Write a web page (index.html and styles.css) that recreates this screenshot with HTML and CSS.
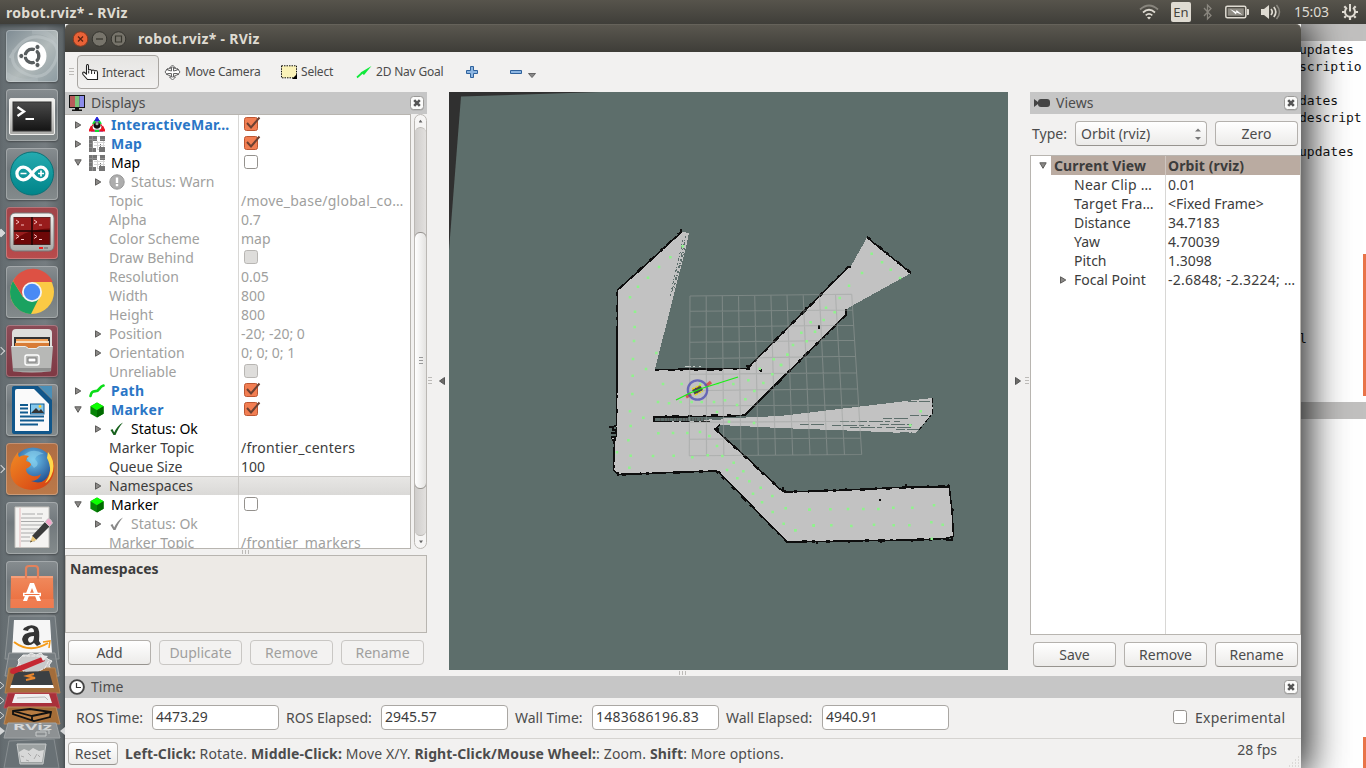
FILE: index.html
```html
<!DOCTYPE html>
<html lang="en">
<head>
<meta charset="utf-8">
<title>robot.rviz* - RViz</title>
<link rel="stylesheet" href="styles.css">
</head>
<body>
<svg class="defs" width="0" height="0" aria-hidden="true">
  <defs>
    <linearGradient id="gOrange" x1="0" y1="0" x2="0" y2="1"><stop offset="0" stop-color="#f08a5d"/><stop offset="1" stop-color="#ea6a3a"/></linearGradient>
    <linearGradient id="gTeal" x1="0" y1="0" x2="0" y2="1"><stop offset="0" stop-color="#25abb0"/><stop offset="1" stop-color="#008489"/></linearGradient>
    <linearGradient id="gMetal" x1="0" y1="0" x2="0" y2="1"><stop offset="0" stop-color="#f4f4f2"/><stop offset="1" stop-color="#a9a9a6"/></linearGradient>
    <linearGradient id="gDark" x1="0" y1="0" x2="0" y2="1"><stop offset="0" stop-color="#4a4a4a"/><stop offset="1" stop-color="#141414"/></linearGradient>
    <radialGradient id="gGlobe" cx=".5" cy=".3" r=".7"><stop offset="0" stop-color="#6cc4ee"/><stop offset="1" stop-color="#14397e"/></radialGradient>
    <linearGradient id="gFox" x1="0" y1="0" x2="1" y2="1"><stop offset="0" stop-color="#f08a24"/><stop offset="1" stop-color="#d33b12"/></linearGradient>
    <symbol id="right" viewBox="0 0 8 8"><path d="M1.500.8 6.800 4 1.500 7.200z" fill="#8b8987" stroke="#5d5c5a" stroke-width="1"/></symbol>
    <symbol id="down" viewBox="0 0 8 8"><path d="M.8.8h6.400L4 6.300z" fill="#8b8987" stroke="#5d5c5a" stroke-width="1"/></symbol>
    <symbol id="checked" viewBox="0 0 18 17"><rect x="1.500" y="2.500" width="13" height="13" rx="2" fill="#f27e52" stroke="#bc5632"/><path d="m4 8 4 4.500L16.500 2.500" fill="none" stroke="#6d4132" stroke-width="2"/></symbol>
    <symbol id="unchecked" viewBox="0 0 18 17"><rect x="1.500" y="2.500" width="13" height="13" rx="2.200" fill="#fff" stroke="#94918d"/></symbol>
    <symbol id="disabled" viewBox="0 0 18 17"><rect x="1.500" y="2.500" width="13" height="13" rx="2.200" fill="#dedddb" stroke="#b8b6b3"/></symbol>
    <symbol id="map" viewBox="0 0 16 16"><path d="M0 0h8v5H4v7h3v4H0zM11 0h5v5h-5zM10 11h1V8h1v3h4v5h-6z" fill="#747474"/><path d="M0 3.500h8M0 7.500h4M0 11.500h4M3.500 0v16M11 3.500h5" stroke="#8f8f8f"/><path d="M8 .5h3M5 6.500h11M5 9.500h11M8 13.500h2M8.500 5v8M14.500 5v6" stroke="#d8d8d8" fill="none"/></symbol>
    <symbol id="marker3" viewBox="0 0 16 16"><path d="M8 3 2 13h12z" fill="none" stroke="#888"/><path d="m8 0 2.500 4h-5zM2 14h12" fill="#22c" stroke="#22d" stroke-width="1"/><path d="m0 14 2-4 3 4zm16 0-2-4-3 4zM4.500 7l-2 3m9-3 2 3" fill="#e12" stroke="#e12" stroke-width="1.200"/><path d="m6 4-2 3m6-3 2 3M6 14h4" stroke="#1d3" stroke-width="2"/><circle cx="8" cy="8.500" r="3.200" fill="#111"/><circle cx="8" cy="6.700" r="1.500" fill="#aaa"/></symbol>
    <symbol id="cube" viewBox="0 0 16 17"><path d="m8 .5 7 4v8l-7 4-7-4v-8z" fill="#078507"/><path d="m8 .5 7 4-7 4.200-7-4.200z" fill="#0bff00"/><path d="m8 8.700 7-4.200v8l-7 4z" fill="#006a00"/></symbol>
    <symbol id="path" viewBox="0 0 16 16"><path d="M1.500 13c1-5 3-4.500 6-5s3-4.500 7-5.500" fill="none" stroke="#0bdc18" stroke-width="2.600" stroke-linecap="round"/></symbol>
    <symbol id="tick" viewBox="0 0 16 16"><path d="M1.500 9 3.500 8l1.700 3.500C7 7.500 10 3.500 14 1.500 10.500 5.500 8 10 6.500 14h-2z" fill="currentColor"/></symbol>
    <symbol id="warn" viewBox="0 0 16 16"><circle cx="8" cy="8" r="7.200" fill="#adadad" stroke="#989898"/><path d="M6.800 3.500h2.400v5.500H6.800zm0 6.500h2.400v2.300H6.800z" fill="#fff"/></symbol>
    <symbol id="close" viewBox="0 0 14 15"><rect x=".5" y="1" width="13" height="13.500" rx="3" fill="#aaa"/><rect x=".5" y=".5" width="13" height="13" rx="3" fill="#fbfbfa" stroke="#9b9a98"/><path d="m4.200 4.200 5.600 5.600m0-5.600L4.200 9.800" stroke="#555" stroke-width="2.600"/></symbol>
  </defs>
</svg>

<div class="desktop">
  <header class="panel">
    <b class="panel-title">robot.rviz* - RViz</b>
    <div class="tray">
      <svg class="wifi" width="20" height="16" viewBox="0 0 20 16" fill="none" stroke="#dfdbd2" stroke-width="1.700"><path d="M1 5.500q9-8 18 0" stroke="#88857d"/><path d="M4 8.500q6-5.500 12 0M6.700 11.300q3.300-3 6.600 0"/><path d="m8 13.500 2 2 2-2q-2-1.500-4 0z" fill="#dfdbd2" stroke="none"/></svg>
      <span class="lang">En</span>
      <svg class="bt" width="10" height="18" viewBox="0 0 10 18"><path d="m1 5 7 7.500-3.500 3.500V2L8 5.500 1 13" fill="none" stroke="#8a877f" stroke-width="1.300"/></svg>
      <svg class="batt" width="24" height="14" viewBox="0 0 24 14"><rect x=".8" y="1.300" width="20" height="11.400" rx="1.500" fill="none" stroke="#dfdbd2" stroke-width="1.500"/><rect x="2.800" y="3.300" width="16" height="7.400" fill="#8f8c84"/><path d="M22 4.500h1.500v5H22" fill="#dfdbd2" stroke="#dfdbd2"/><path d="m5 4 6 3 .5-2 6 5-6-2.500-.5 2z" fill="#fff"/></svg>
      <svg class="vol" width="20" height="16" viewBox="0 0 20 16"><path d="M0 5h3l5-4v14l-5-4H0z" fill="#dfdbd2"/><path d="M10 5q2.500 3 0 6M12.800 3q4 5 0 10" fill="none" stroke="#dfdbd2" stroke-width="1.700"/><path d="M15.500 1q6 7 0 14" fill="none" stroke="#8a877f" stroke-width="1.500"/></svg>
      <span class="clock">15:03</span>
      <svg class="gear" width="16" height="16" viewBox="0 0 16 16" fill="none" stroke="#dfdbd2"><path d="M5 3.800a5 5 0 1 0 6 0" stroke-width="2"/><path d="M8 0v7.500" stroke-width="2"/><path d="M2.300 2.300 4 4m9.700-1.700L12 4M0 8h3m10 0h3M2.300 13.700 4 12m9.700 1.700L12 12M8 13v3" stroke-width="2.200"/></svg>
    </div>
  </header>

  <div class="workspace">
    <nav class="launcher">
      <div class="tile t-dash"><svg viewBox="0 0 52 52"><path d="M4 28Q18 2 38 8T48 34Q38 52 20 44T8 20" fill="none" stroke="#c3cbce" stroke-width="3" opacity=".5"/><path d="M0 44Q12 54 32 50M26 2q22-2 26 18" fill="none" stroke="#c3cbce" stroke-width="5" opacity=".25"/><circle cx="26" cy="26" r="14.500" fill="#fff"/><circle cx="26" cy="26" r="6.800" fill="none" stroke="#585d5f" stroke-width="3.400"/><path d="M26 26 14 26M26 26l6.500-11M26 26l6.500 11" stroke="#fff" stroke-width="1.500"/><g fill="#585d5f" stroke="#fff"><circle cx="15.300" cy="26" r="2.600"/><circle cx="31.500" cy="17" r="2.600"/><circle cx="31.500" cy="35" r="2.600"/></g><circle cx="26" cy="26" r="4.900" fill="#fff"/></svg></div>
      <div class="tile t-gray"><svg viewBox="0 0 52 52"><rect x="3.500" y="9.500" width="45" height="36" rx="1.500" fill="url(#gMetal)" stroke="#efefed"/><rect x="7" y="13" width="38" height="29" fill="url(#gDark)" stroke="#333"/><path d="m11.500 18 6.500 4.500-6.500 4.500" fill="none" stroke="#fff" stroke-width="2.400"/><path d="M19.500 30H28" stroke="#fff" stroke-width="2"/></svg></div>
      <div class="tile t-gray"><svg viewBox="0 0 52 52"><circle cx="26" cy="25.500" r="21.500" fill="url(#gTeal)" stroke="#087277"/><path d="M26 25.500c-3-4.500-5.500-6.300-8.800-6.300a6.300 6.300 0 0 0 0 12.600c3.300 0 5.800-2 8.800-6.300s5.500-6.300 8.800-6.300a6.300 6.300 0 0 1 0 12.600c-3.300 0-5.800-2-8.800-6.300z" fill="none" stroke="#fff" stroke-width="3.300"/><path d="M14.500 25.500h6M32 25.500h6m-3-3v6" stroke="#fff" stroke-width="1.700"/></svg></div>
      <div class="tile t-red has-arrow solid"><svg viewBox="0 0 52 52"><rect x="4" y="6" width="44" height="38" rx="5" fill="url(#gMetal)" stroke="#777"/><rect x="8" y="10.500" width="36" height="27" fill="#6d0707" stroke="#4a2222"/><path d="M8 10.500h36v11Q20 22 8 34z" fill="#b62b2b" opacity=".6"/><path d="M26 10v28M8 24h36" stroke="#180404" stroke-width="1.400"/><path d="m10 13 3 2-3 2m5 1h3M28 13l3 2-3 2m5 1h3M10 27.500l3 2-3 2m5 1h3M28 27.500l3 2-3 2m5 1h3" fill="none" stroke="#f7bcbc"/><path d="M33 41h4" stroke="#e22" stroke-width="2"/><path d="M38 41h4" stroke="#888" stroke-width="2"/></svg></div>
      <div class="tile t-gray"><svg viewBox="0 0 52 52"><circle cx="26" cy="26" r="22" fill="#fbca45"/><path d="M26 26 7 15a22 22 0 0 1 39.800 1H26z" fill="#dd5144"/><path d="M7 15 17 31a22 22 0 0 0 17-1l-9 18A22 22 0 0 1 7 15z" fill="#1aa260"/><path d="m7 15 10 16 9-15z" fill="#dd5144"/><circle cx="26" cy="26" r="10" fill="#f4f4f4"/><circle cx="26" cy="26" r="8.200" fill="#4a8af4"/></svg></div>
      <div class="tile t-wine has-arrow"><svg viewBox="0 0 52 52"><path d="M6 8q0-4 4-4h32q4 0 4 4v14H6z" fill="#dededb"/><path d="M8 12h36v12H8z" fill="#333"/><path d="M10 14h32v8H10z" fill="#f2a259"/><path d="M9 18h34v6H9z" fill="#d87c36"/><path d="M10 17h33" stroke="#f7dec0" stroke-width="2"/><path d="M5 21h14l3 2h8l3-2h14l-2 25q-19 3-38 0z" fill="#b7b8b6"/><path d="M5.500 21.500h14l3 2h8l3-2h13" fill="none" stroke="#ececea"/><path d="m7 43 38 0-.3 3.500H7.300z" fill="#8f908f"/><rect x="19" y="30" width="14" height="10" rx="2" fill="none" stroke="#fff" stroke-width="1.400"/><rect x="22" y="33" width="8" height="4" fill="#fff" stroke="#777"/></svg></div>
      <div class="tile t-gray"><svg viewBox="0 0 52 52"><path d="M8 2h24l14 14v32q0 2-2 2H8q-2 0-2-2V4q0-2 2-2z" fill="#10568a"/><path d="M33 2h13v13z" fill="#4a8fb8"/><path d="M11 5h17l15 15v27H9V7q0-2 2-2z" fill="#fafafa"/><path d="M14 21h8M14 24.500h8M14 28.500h8M14 32.500h24M14 36.500h24M14 40.500h18" stroke="#115b8f" stroke-width="1.800"/><rect x="24.500" y="20" width="13.500" height="10" fill="#83c8ed" stroke="#115b8f"/><path d="m25 29 5-5 3 3 2-2 3 4z" fill="#343434"/><circle cx="34" cy="22.500" r="1.400" fill="#fc3"/></svg></div>
      <div class="tile t-orange has-arrow"><svg viewBox="0 0 52 52"><circle cx="27" cy="25" r="20.500" fill="url(#gGlobe)"/><path d="M18 12q9-8 20-1-7 0-9 5 6 6-1 9z" fill="#90d6ef" opacity=".55"/><path d="M45 13q4 7 3 16-4 17-22 18Q9 46 5 33 2 21 12 9q0 3 1 5 4-3 10-1-3 2-3 5 5 1 5 4-1 2-5 4 0 4 4 6 6 3 11-1-2 7-10 7 13 5 18-7 3-8-1-18z" fill="url(#gFox)"/><path d="M42 9q7 8 5 19-3 10-8 12 9-12 2-25z" fill="#ffd84b"/></svg></div>
      <div class="tile t-gray"><svg viewBox="0 0 52 52"><path d="M9 5h34v40.500H9z" fill="#f4f3f1" stroke="#c3c1bd"/><path d="M14 6v39" stroke="#e2a3a7" stroke-width=".7"/><path d="M16 12h13m2 0h6M15 16h21M15 19.500h23M15 23h22M15 27h17M15 31h16M15 35h9M15 39h14" stroke="#aaa" stroke-width="1"/><path d="m26 34 13-14 4.500 4.500L30 38z" fill="#3b3b3b"/><path d="m24 40.500 2.500-6.500 4 4z" fill="#e9c678"/><path d="m24 40.500 2-1-1-1z" fill="#222"/><path d="m39 20 3-3.500q3 0 4.500 4.500l-3 3.500z" fill="#f3a6ca" stroke="#c8c8c8"/></svg></div>
      <div class="tile t-gray"><svg viewBox="0 0 52 52"><path d="M5 15h42l.5 32H4.500z" fill="url(#gOrange)"/><path d="M5 15h42v2H5z" fill="#f5a07b"/><path d="M20 18V8q0-3 3-3h6q3 0 3 3v10" fill="none" stroke="#e3815b" stroke-width="2.200"/><path d="M4.500 38H48v9H4.500z" fill="#f4855c" opacity=".6"/><path d="m17 40 7-18h4l7 18h-4l-5-13-5 13z" fill="#fff"/><path d="M17 33.500h18" stroke="#fff" stroke-width="3.500"/><path d="M18.500 33.500h15" stroke="#ed7545"/></svg></div>
      <svg class="folded" width="65" height="155" viewBox="0 613 65 155">
        <path d="M9 616h46l4 43H5z" fill="#737b80" fill-opacity=".6" stroke="#8e9496"/>
        <path d="M14 620h36l2 33H12z" fill="#f6f6f6"/>
        <path d="M24 628q7-5 13-1 3 2 2 14l2 3-4 2-3-3q-5 4-10 1-4-6 1-10 4-2 9-2 0-4-3-4-3 1-3 3l-5-1zm10 8q-6 0-6 4 1 4 4 2 2-1 2-6z" fill="#333"/>
        <path d="M14 642q16 12 34 1" fill="none" stroke="#f49b19" stroke-width="2"/><path d="m43 642 7-1-1 7" fill="none" stroke="#f49b19" stroke-width="1.500"/>
        <path d="M9 653h46l4 23H5z" fill="#777e82" fill-opacity=".75" stroke="#979b9d"/>
        <path d="m20 659 3-4h5l3-2 5 2 5-2 4 5 7 3-3 4 2 5-8 2-7 4-9-1-5-4-7-1 3-5z" fill="#c9caca" stroke="#eee"/>
        <path d="M9 668h46l5 25H5z" fill="#a36d3b" stroke="#b4824e"/>
        <path d="m18 660 4-4h22l5 4-4 8-10 5-12-2z" fill="#c9caca" stroke="#eee" stroke-dasharray="4 1"/>
        <path d="m15 672 34-1 4 14H11z" fill="#3c4043"/><path d="M11 685h42l1 3H10z" fill="#fff"/><path d="m34 674-7 2 8 2-9 2" fill="none" stroke="#e9872e" stroke-width="2"/>
        <path d="m11 669 31-12 3 4-31 13q-6 0-3-5z" fill="#c52732"/>
        <path d="m40 655 8 1-5 5z" fill="#e8e8e8"/>
        <path d="M8 693h48l4 15H4z" fill="#a9303b" stroke="#ba4c54"/>
        <path d="m15 694 34 0 3 9H12z" fill="#eee"/><path d="m17 698 28-1 3 3" stroke="#bbb" fill="none"/>
        <path d="M8 707h48l4 17H4z" fill="#a56e38" stroke="#b98a5e"/>
        <path d="m13 711 17-2 21 3-1 5-16 4-21-7zl19 5 19-4-19 4v5" fill="#b87c42" stroke="#111" stroke-width="1.800"/>
        <path d="M8 723h48l4 15H4z" fill="#8d9193" stroke="#9fa3a5"/>
        <text x="13" y="730" class="rviz-mark" textLength="39" lengthAdjust="spacingAndGlyphs">RViz</text><path d="M36 732h10v4H36zm4-2h9v4" fill="none" stroke="#c7caca"/>
        <path d="m9 741 45-2 5 29H4z" fill="#697175" stroke="#878d90"/>
        <path d="M17 744h29l-3 20H20z" fill="#9da2a2" stroke="#c7caca"/><path d="m19 752 5-3 5 2 4-3 6 3 5-1-2 12H21z" fill="#dedede" opacity=".9"/><path d="m21 756 3 1m4-4 3 3m6-2-3 5m-8 1 3 1m9-6 2 2" stroke="#aaa"/>
        <path d="m0 682 4 3.500-4 3.500m0 8 4 3.500-4 3.500m0 8 4 3.500-4 3.500" fill="none" stroke="#d5d7d8"/><path d="m0 727 5 4-5 4zm65 0-5 4 5 4z" fill="#d5d7d8"/>
      </svg>
    </nav>

    <main class="window">
      <div class="titlebar">
        <svg width="56" height="18" viewBox="0 0 56 18"><circle cx="8.500" cy="9" r="7.300" fill="#e96237" stroke="#873a20"/><path d="m6 6.500 5 5m0-5-5 5" stroke="#5c2413" stroke-width="1.300"/><circle cx="27.500" cy="9" r="7.300" fill="#77746b" stroke="#34332e"/><path d="M24 9h7" stroke="#38372f" stroke-width="1.300"/><circle cx="46.500" cy="9" r="7.300" fill="#77746b" stroke="#34332e"/><path d="M43.500 6h6v6h-6z" fill="none" stroke="#38372f" stroke-width="1.200"/></svg>
        <b>robot.rviz* - RViz</b>
      </div>

      <div class="toolbar">
        <i class="grip"></i>
        <div class="tool active"><svg width="17" height="17" viewBox="0 0 17 17"><path d="M4.500 10V2q0-1.500 1-1.500T6.500 2v4.500Q6.500 5.500 8 5.500T9.500 7q0-1 1.500-1t1.500 1.500q0-1 1.500-1t1.500 2v7H5.500L1 10.500Q0 8 2 8z" fill="#fff" stroke="#222" stroke-width="1.100"/><path d="M6.700 7v2.500m2.900-3V10m2.900-2v2" stroke="#222"/></svg><span>Interact</span></div>
        <div class="tool move"><svg width="17" height="17" viewBox="0 0 17 17" fill="none" stroke="#666" stroke-width="1"><path d="m8.500 1 3 3h-2v3l4-1V4.500L16 8l-2.500 3V9.500h-4V13h2l-3 3-3-3h2V9.500h-4V11L1 8l2.500-3.500V6l4 1V4h-2z" fill="#fff"/><path d="m2 6 6.500-3L15 6m-13 4 6.500 3L15 10"/></svg><span>Move Camera</span></div>
        <div class="tool select"><svg width="16" height="14" viewBox="0 0 16 14"><rect x=".5" y=".8" width="15" height="12" fill="#fbf3b9" stroke="#111" stroke-dasharray="1.500 1"/><path d="M16 9v5h-5z" fill="#000"/></svg><span>Select</span></div>
        <div class="tool nav"><svg width="16" height="14" viewBox="0 0 16 14"><path d="m1 12.500 5-4.500" stroke="#11e93b" stroke-width="1.700"/><path d="M4.500 7.500 15.500 1 8 10z" fill="#11e93b"/></svg><span>2D Nav Goal</span></div>
        <svg class="plus" width="12" height="12" viewBox="0 0 12 12"><path d="M4.500.5h3v4h4v3h-4v4h-3v-4h-4v-3h4z" fill="#8db6e2" stroke="#2f629c"/></svg>
        <svg class="minus" width="12" height="4" viewBox="0 0 12 4"><path d="M.5.5h11v3H.5z" fill="#8db6e2" stroke="#2f629c"/></svg>
        <svg class="drop" width="8" height="5" viewBox="0 0 8 5"><path d="M.5.5h7L4 4.500z" fill="#888" stroke="#666"/></svg>
      </div>

      <div class="body">
        <section class="displays">
          <div class="dock-head"><svg width="16" height="16" viewBox="0 0 16 16"><path d="M0 0h16v13H0z" fill="#111"/><path d="M1 1h5v11H1z" fill="#b95a5a"/><path d="M6 1h4.500v11H6z" fill="#7bc37b"/><path d="M10.500 1H15v11h-4.500z" fill="#8b8bea"/><path d="M6 13h4v1.500h3V16H3v-1.500h3z" fill="#111"/></svg><span>Displays</span><svg class="x" width="14" height="15"><use href="#close"/></svg></div>
          <div class="tree-area">
            <div class="tree">
              <div class="row l1 on"><div class="key"><svg class="ar"><use href="#right"/></svg><svg class="ic"><use href="#marker3"/></svg><b>InteractiveMar…</b></div><div class="val"><svg class="cb"><use href="#checked"/></svg></div></div>
              <div class="row l1 on"><div class="key"><svg class="ar"><use href="#right"/></svg><svg class="ic"><use href="#map"/></svg><b>Map</b></div><div class="val"><svg class="cb"><use href="#checked"/></svg></div></div>
              <div class="row l1 off"><div class="key"><svg class="ar"><use href="#down"/></svg><svg class="ic"><use href="#map"/></svg><span>Map</span></div><div class="val"><svg class="cb"><use href="#unchecked"/></svg></div></div>
              <div class="row l2 dim"><div class="key"><svg class="ar"><use href="#right"/></svg><svg class="ic"><use href="#warn"/></svg><span>Status: Warn</span></div><div class="val"></div></div>
              <div class="row l3 dim"><div class="key">Topic</div><div class="val wide">/move_base/global_co…</div></div>
              <div class="row l3 dim"><div class="key">Alpha</div><div class="val">0.7</div></div>
              <div class="row l3 dim"><div class="key">Color Scheme</div><div class="val">map</div></div>
              <div class="row l3 dim"><div class="key">Draw Behind</div><div class="val"><svg class="cb"><use href="#disabled"/></svg></div></div>
              <div class="row l3 dim"><div class="key">Resolution</div><div class="val">0.05</div></div>
              <div class="row l3 dim"><div class="key">Width</div><div class="val">800</div></div>
              <div class="row l3 dim"><div class="key">Height</div><div class="val">800</div></div>
              <div class="row l2 dim"><div class="key"><svg class="ar"><use href="#right"/></svg>Position</div><div class="val">-20; -20; 0</div></div>
              <div class="row l2 dim"><div class="key"><svg class="ar"><use href="#right"/></svg>Orientation</div><div class="val">0; 0; 0; 1</div></div>
              <div class="row l3 dim"><div class="key">Unreliable</div><div class="val"><svg class="cb"><use href="#disabled"/></svg></div></div>
              <div class="row l1 on"><div class="key"><svg class="ar"><use href="#right"/></svg><svg class="ic"><use href="#path"/></svg><b>Path</b></div><div class="val"><svg class="cb"><use href="#checked"/></svg></div></div>
              <div class="row l1 on"><div class="key"><svg class="ar"><use href="#down"/></svg><svg class="ic"><use href="#cube"/></svg><b>Marker</b></div><div class="val"><svg class="cb"><use href="#checked"/></svg></div></div>
              <div class="row l2 off"><div class="key"><svg class="ar"><use href="#right"/></svg><svg class="ic green"><use href="#tick"/></svg><span>Status: Ok</span></div><div class="val"></div></div>
              <div class="row l3"><div class="key">Marker Topic</div><div class="val wide">/frontier_centers</div></div>
              <div class="row l3"><div class="key">Queue Size</div><div class="val">100</div></div>
              <div class="row l2 current"><div class="key"><svg class="ar"><use href="#right"/></svg>Namespaces</div><div class="val"></div></div>
              <div class="row l1 off"><div class="key"><svg class="ar"><use href="#down"/></svg><svg class="ic"><use href="#cube"/></svg><span>Marker</span></div><div class="val"><svg class="cb"><use href="#unchecked"/></svg></div></div>
              <div class="row l2 dim"><div class="key"><svg class="ar"><use href="#right"/></svg><svg class="ic gray"><use href="#tick"/></svg><span>Status: Ok</span></div><div class="val"></div></div>
              <div class="row l3 dim"><div class="key">Marker Topic</div><div class="val wide">/frontier_markers</div></div>
            </div>
            <div class="scrollbar"><i class="up"></i><div class="track"><div class="thumb"><i></i></div></div><i class="dn"></i></div>
          </div>
          <div class="hsplit"><i></i></div>
          <div class="descr"><b>Namespaces</b></div>
          <div class="buttons"><button>Add</button><button disabled>Duplicate</button><button disabled>Remove</button><button disabled>Rename</button></div>
        </section>

        <div class="vsplit left"><i class="grip"></i><svg width="6" height="8" viewBox="0 0 6 8"><path d="M5.500.5v7L.5 4z" fill="#6c6b69" stroke="#555"/></svg></div>

        <svg class="view3d" width="559" height="578" viewBox="449 92 559 578">
          <path d="M449 92h559v578H449z" fill="#303030"/>
          <path d="M461 96.500 600 92h408v578H449V250z" fill="#5d6e6b"/>
          <g shape-rendering="crispEdges">
            <path d="M683 232 689 233 687 243 655 369 747 368 780 335.500 848 267 851 266 867 237.500 911 273 850 307 846 310 846 315 780 380 745 415 727 416 654 416.500 654 421 700 421 712 419 780 416 932 398 933 413 915 433.500 860 431 780 428 720 425 715 429 747 458 780 488 785 492 847 490 907 487 946 486.500 949 485 952 510 953.500 536 947 538.500 912 540 787 542 719 472 715 470.500 618 474 613.500 470 614.500 440 610 438 616 436 616 365 618 290z" fill="#c2c2c2"/>
            <g fill="none" stroke="#5d6e6b">
              <path d="M683 240 678 262 671 292M686 236 679 266 670 298M685 248 674 288" stroke-dasharray="2 2 1 1 3 3"/>
              <path d="M883 418.500H908M858 421.500H900M880 424.500H915M832 425.500H870M850 427.500H912M896 429.500H920M840 421.500H855M910 415.500H928M900 432.500H912M908 401.500H930M800 424.500H824" stroke-dasharray="9 2 14 2 5 4"/>
              <path d="M700 418.500h24" stroke-width="2" stroke-dasharray="9 3"/>
            </g>
            <path d="M660 419h44" stroke="#555" stroke-width="3" stroke-dasharray="1 3 1 2 1 1"/>
            <g fill="none" stroke="#0e0e0e" stroke-width="1.500">
              <path d="M681 232.500 620 288 617.500 290 617 365 616.500 425 612 428M616.500 427V436L611 438M614.500 440 613.500 470 618 474.500 715 471 719 472 787 542 848 541 912 540 947 538.500 953.500 536 952 510 949 485"/>
              <path d="M655 369.500 747 368.500 780 335.500 813 303 848 267M867 237.500 911 273M846 309V315L780 380 745 415 727 416.500 654 417V421.500H672"/>
              <path d="M720 425 715 429 747 458 780 489 785 492 847 490 907 487 946 487 949 485"/>
              <path d="M932 398 933 413 919 430" stroke-width="1" stroke-dasharray="5 2 2 2"/>
              <path d="M674 421.500H714" stroke-dasharray="5 2 9 4"/>
            </g>
            <g fill="none" stroke="#0e0e0e" stroke-width="2.500" stroke-dasharray="4 9 7 5 3 11">
              <path d="M681 232 620 288M617 292V420M614 440V470L620 474.500 716 471 787 542 848 541 947 539"/>
              <path d="M655 370 747 369 848 267M867 237 911 273M846 315 745 415 654 417"/>
              <path d="M715 429 780 489 786 492 847 490 946 486"/>
            </g>
            <path d="M609 427h4v3h3v3h-5M611 437h4v3h-3M681 229v4M746 366h3v3h-3M847 267h4M805 308h3M759 370h2v2M823 337h2M714 429h4v4M817 541v3M849 540v3M881 540v3M912 539v3M947 537v3h5v-4M846 488v3M876 487v3M906 484v3M947 487h3M951 510h3M879 500h2M819 325v4M783 487v5M618 472v4" fill="none" stroke="#0e0e0e" stroke-width="1.500"/>
            <path d="M685 366.500h6m2 0h2m4 0h2" stroke="#c7cdca" stroke-width="1"/>
          </g>
          <path d="M690 296 851.700 294.300M690 311.300 852.600 310M690 327 853.800 325.300M690 342.300 854.900 340.300M690 358.700 855.700 356.300M690 374.300 856.800 372.700M690 390.700 857.800 388.700M690 406 859 405M690 422.300 860 421.300M690 439.300 860.700 438M689 455.700 861.700 454.500M690 296 689.300 455.700M706.200 296 706.500 455.600M722.300 295.700 723.800 455.500M738.500 295.500 741 455.400M754.700 295.300 758.300 455.200M770.900 295.200 775.500 455M787 295 792.700 455M803.200 294.800 810 455M819.400 294.600 827.200 455M835.500 294.500 844.500 454.600M851.700 294.300 861.700 454.500" stroke="#9b9f9e" stroke-opacity=".5" stroke-width="1.100" fill="none"/>
          <g stroke="#8ff38c" stroke-width="7.500" stroke-linecap="square" fill="none">
            <path transform="translate(590 215) scale(.33333)" d="M278 94h.1M241 127h.1M207 156h.1M174 188h.1M144 215h.1M120 247h.1M135 290h.1M134 336h.1M132 378h.1M199 414h.1M129 432h.1M168 462h.1M128 482h.1M127 537h.1M120 589h.1M160 608h.1M122 633h.1M115 676h.1M81 712h.1M122 722h.1M118 758h.1M205 655h.1M249 654h.1M292 654h.1M330 651h.1M358 663h.1M381 693h.1M353 721h.1M397 723h.1M307 727h.1M251 722h.1M189 723h.1M219 507h.1M275 507h.1M331 507h.1M383 507h.1M430 507h.1M475 496h.1M493 528h.1M520 504h.1M466 553h.1M441 570h.1M405 556h.1M372 561h.1M335 561h.1M305 561h.1M272 561h.1M237 565h.1M204 561h.1M381 591h.1M417 620h.1M492 624h.1M509 461h.1M551 433h.1M547 478h.1M573 450h.1M592 419h.1M431 743h.1M411 765h.1M460 769h.1M442 790h.1M478 799h.1"/>
            <path transform="translate(600 360) scale(.33333)" d="M482 383h.1M459 401h.1M517 408h.1M486 427h.1M518 456h.1M557 445h.1M551 491h.1M586 511h.1M628 449h.1M641 497h.1"/>
            <path transform="translate(780 220) scale(.33333)" d="M275 101h.1M306 127h.1M332 149h.1M360 174h.1M246 159h.1M207 197h.1M179 234h.1M138 263h.1M164 277h.1M131 300h.1M92 307h.1M64 338h.1M105 335h.1M80 364h.1M39 375h.1M22 404h.1M3 435h.1M422 574h.1M391 616h.1M89 869h.1M151 868h.1M204 867h.1M250 867h.1M295 867h.1M340 863h.1M397 863h.1M462 856h.1M454 907h.1M488 914h.1M455 956h.1M388 916h.1M341 916h.1M282 914h.1M214 918h.1M154 916h.1M101 916h.1M46 931h.1"/>
          </g>
          <path d="m686 397 5-3m15-8 5-4" stroke="#d05a5a" stroke-width="3.500"/>
          <path d="m692 390 8-5 3 5-8 5z" fill="#4a4a48"/><path d="m692 389 9-4m-6 10 8-4" stroke="#ead414" stroke-width="1.400" stroke-dasharray="3 1"/>
          <circle cx="697.500" cy="390" r="9.700" fill="none" stroke="#5151b4" stroke-opacity=".8" stroke-width="2.200"/>
          <path d="m676 400 14-7 13-5 13-4 22-7" fill="none" stroke="#18f013" stroke-width="1.300"/>
        </svg>

        <div class="vsplit right"><svg width="6" height="8" viewBox="0 0 6 8"><path d="M.5.5v7l5-3.500z" fill="#6c6b69" stroke="#555"/></svg><i class="grip"></i></div>

        <section class="views">
          <div class="dock-head"><svg width="16" height="8" viewBox="0 0 16 8"><path d="M0 0v8l4-3V3z" fill="#444"/><rect x="4" width="12" height="8" rx="3" fill="#444"/></svg><span>Views</span><svg class="x" width="14" height="15"><use href="#close"/></svg></div>
          <div class="type-row"><label>Type:</label><div class="combo"><span>Orbit (rviz)</span><svg width="6" height="12" viewBox="0 0 6 12"><path d="M0 3.500 3 .5l3 3zM0 9l3 3 3-3z" fill="#777"/></svg></div><button>Zero</button></div>
          <div class="tree vtree">
            <div class="row cur"><svg class="ar"><use href="#down"/></svg><b class="key">Current View</b><b class="val">Orbit (rviz)</b></div>
            <div class="row sub"><div class="key wide">Near Clip …</div><div class="val">0.01</div></div>
            <div class="row sub"><div class="key wide">Target Fra…</div><div class="val">&lt;Fixed Frame&gt;</div></div>
            <div class="row sub"><div class="key">Distance</div><div class="val">34.7183</div></div>
            <div class="row sub"><div class="key">Yaw</div><div class="val">4.70039</div></div>
            <div class="row sub"><div class="key">Pitch</div><div class="val">1.3098</div></div>
            <div class="row sub arrowed"><div class="key"><svg class="ar"><use href="#right"/></svg>Focal Point</div><div class="val wide">-2.6848; -2.3224; …</div></div>
          </div>
          <div class="buttons"><button>Save</button><button>Remove</button><button>Rename</button></div>
        </section>
      </div>

      <div class="hsplit mid"><i></i></div>
      <div class="dock-head time-head"><svg width="16" height="16" viewBox="0 0 16 16"><circle cx="8" cy="8" r="6.900" fill="#fff" stroke="#444" stroke-width="1.900"/><path d="M7.500 4v4.500H12" fill="none" stroke="#333" stroke-width="1.200"/></svg><span>Time</span><svg class="x" width="14" height="15"><use href="#close"/></svg></div>
      <div class="time-row">
        <label class="f1">ROS Time:</label><div class="field">4473.29</div>
        <label class="f2">ROS Elapsed:</label><div class="field">2945.57</div>
        <label class="f3">Wall Time:</label><div class="field wide">1483686196.83</div>
        <label class="f4">Wall Elapsed:</label><div class="field">4940.91</div>
        <svg class="cb exp"><use href="#unchecked"/></svg><label class="wide">Experimental</label>
      </div>
      <footer class="status"><button>Reset</button><p><b>Left-Click:</b> Rotate. <b>Middle-Click:</b> Move X/Y. <b>Right-Click/Mouse Wheel:</b>: Zoom. <b>Shift</b>: More options.</p><span class="fps">28 fps</span></footer>
      <svg class="resize" width="12" height="12" viewBox="0 0 12 12"><path d="M1 11h11M4 8h8M7 5h5M10 2h2" stroke="#c4c2bf" stroke-dasharray="1 2"/></svg>
    </main>

    <aside class="behind">
      <div class="back-head"></div>
      <pre class="back-text">updates
scriptio

dates
descript

updates










l</pre>
      <div class="back-bar"></div>
      <i class="scroll s1"></i><i class="scroll s2"></i>
    </aside>
  </div>
</div>
</body>
</html>
```
FILE: styles.css
```css
* { box-sizing: border-box; }
body { margin: 0; width: 1366px; height: 768px; overflow: hidden; font: 14px/19px "Noto Sans", "Open Sans", sans-serif; color: #4c4c4c; }
svg { display: block; flex: none; }
.defs { position: absolute; }
.desktop { width: 1366px; height: 768px; display: flex; flex-direction: column; overflow: hidden; }

.panel { height: 24px; flex: none; display: flex; align-items: center; justify-content: space-between; padding: 0 8px 0 6px; background: linear-gradient(#57544c, #3f3e39); color: #dfdbd2; z-index: 2; }
.panel-title { font-size: 14px; letter-spacing: .3px; }
.tray { display: flex; align-items: center; }
.lang { width: 20px; height: 20px; margin: 0 12px 0 12px; background: #dfdbd2; color: #45433d; border-radius: 2px; text-align: center; font-size: 13px; line-height: 20px; }
.bt { margin-right: 12px; }
.batt { margin-right: 12px; }
.vol { margin-right: 13px; }
.clock { width: 36px; margin: -1px 12px 0 0; font-size: 14px; letter-spacing: -.2px; white-space: nowrap; }

.workspace { flex: 1; display: flex; min-height: 0; }
.launcher { width: 65px; flex: none; padding: 6px 0 0 6px; background: linear-gradient(90deg, #646c70, #757c80 70%, #5e6568 96%, #4a4f52); display: flex; flex-direction: column; gap: 7px; overflow: hidden; box-shadow: inset 0 5px 5px -3px #3d4244; }
.tile { position: relative; width: 52px; height: 52px; flex: none; border-radius: 4px; box-shadow: inset 0 0 0 1px rgba(255,255,255,.25), 0 1px 2px rgba(0,0,0,.35); }
.tile svg { width: 52px; height: 52px; }
.t-dash { background: linear-gradient(135deg, #7e8b93, #b3bbbb 55%, #8d9ba1); }
.t-gray { background: linear-gradient(#878d90, #71787c 40%, #848b8c); }
.t-red { background: linear-gradient(#9f464b, #b24347 60%, #b84d4d); }
.t-wine { background: linear-gradient(#8b4c57, #7f3944); }
.t-orange { background: linear-gradient(#af6d43, #bb7949); }
.has-arrow::before { content: ""; position: absolute; left: -8px; top: 23px; width: 5px; height: 5px; border: solid #d5d7d8; border-width: 1px 1px 0 0; transform: rotate(45deg); }
.has-arrow.solid::before { background: #d5d7d8; }
.folded { margin: -7px 0 0 -6px; }
.rviz-mark { font: bold 9px "Noto Sans", sans-serif; fill: #d5d7d8; }

.window { position: relative; width: 1236px; flex: none; display: flex; flex-direction: column; background: #f2f1f0; z-index: 1; box-shadow: 4px 4px 36px 4px rgba(0,0,0,.85); clip-path: inset(0 -65px 0 0); }
.titlebar { height: 28px; flex: none; display: flex; align-items: center; gap: 10px; padding-left: 7px; border-radius: 5px 5px 0 0; background: linear-gradient(#5a574f, #3e3d38); border-top: 1px solid #65625a; color: #dfdbd2; font-size: 14px; letter-spacing: .3px; }

.toolbar { height: 40px; flex: none; display: flex; align-items: center; font-size: 12px; padding-left: 4px; }
.grip { width: 5px; height: 8px; flex: none; background: repeating-linear-gradient(#bdbbb8 0 1px, transparent 1px 3px); }
.tool { display: flex; align-items: center; height: 34px; }
.tool span { white-space: nowrap; margin-top: -1px; letter-spacing: -.2px; }
.tool.active { width: 82px; margin-left: 3px; padding-left: 4px; border: 1px solid #a9a6a2; border-radius: 4px; background: linear-gradient(#e6e5e3, #f2f1f0); gap: 3px; }
.tool.active span { margin-top: 1px; }
.move { width: 115px; padding-left: 5px; gap: 4px; }
.select { width: 76px; padding-left: 7px; gap: 4px; }
.nav { width: 106px; padding-left: 6px; gap: 4px; }
.plus { margin: 0 32px 0 10px; }
.minus { margin-right: 6px; }
.drop { margin-top: 6px; }

.body { height: 578px; flex: none; display: flex; }
.displays { width: 362px; height: 578px; display: flex; flex-direction: column; }
.dock-head { height: 22px; flex: none; display: flex; align-items: center; gap: 6px; padding: 0 3px 0 4px; background: #c6c6c6; }
.dock-head span { margin-top: -2px; }
.dock-head .x { margin-left: auto; }
.tree-area { display: flex; height: 435px; }
.tree { width: 346px; height: 435px; overflow: hidden; border: 1px solid #b8b5b0; border-left: 0; background: linear-gradient(90deg, transparent 173px, #d8d7d5 173px 174px, transparent 174px) #fff; }
.row { height: 19px; display: flex; white-space: nowrap; color: #3c3c3c; }
.key { width: 174px; display: flex; align-items: center; flex: none; }
.val { padding-left: 2px; flex: 1; display: flex; align-items: center; }
.row b { letter-spacing: .25px; }
.wide { letter-spacing: .25px; }
.ar { width: 8px; height: 8px; }
.ic { width: 16px; height: 16px; }
.cb { width: 18px; height: 17px; margin: -2px 0 0 2px; }
.l1 .key { padding-left: 9px; gap: 7px; }
.l2 .key { padding-left: 29px; gap: 7px; }
.l3 .key { padding-left: 44px; }
.l1 .ic { margin-right: -1px; }
.l2 .ic { margin-right: -1px; }
.row.on { color: #2a76c6; }
.row.off { color: #000; }
.row.dim { color: #a09f9e; }
.green { color: #17611d; }
.gray { color: #888; }
.current { background: linear-gradient(90deg, transparent 173px, #cbc9c6 173px 174px, transparent 174px), linear-gradient(#e8e7e5, #dad9d7); box-shadow: inset 0 1px #cbc9c6; }
.scrollbar { width: 13px; height: 435px; margin-left: 3px; border: 1px solid #bbb8b4; border-radius: 7px; background: #f6f5f4; overflow: hidden; display: flex; flex-direction: column; }
.scrollbar .up, .scrollbar .dn { height: 12px; flex: none; align-self: center; width: 4px; clip-path: polygon(50% 40%, 100% 62%, 0 62%); background: #666; }
.scrollbar .dn { transform: rotate(180deg); }
.track { flex: 1; background: linear-gradient(90deg, #cfcdcb, #e2e0de); border: solid #bbb8b4; border-width: 1px 0; border-radius: 6px; padding-top: 104px; }
.thumb { height: 257px; border: 1px solid #96938f; border-radius: 6px; background: linear-gradient(90deg, #fff, #e4e3e1); display: flex; align-items: center; justify-content: center; margin: 0 -1px; }
.thumb i { width: 4px; height: 8px; background: repeating-linear-gradient(#999 0 1px, transparent 1px 3px); }
.hsplit { height: 6px; flex: none; display: flex; justify-content: center; align-items: center; }
.hsplit i { width: 8px; height: 4px; background: repeating-linear-gradient(90deg, #bdbbb8 0 1px, transparent 1px 3px); }
.descr { height: 78px; flex: none; border: 1px solid #b8b5b0; background: #edeae6; padding: 3px 4px; color: #3c3c3c; }
.buttons { display: flex; gap: 8px; padding: 7px 3px 0; }
button { font: 14px/19px "Noto Sans", "Open Sans", sans-serif; color: #4c4c4c; width: 83px; height: 25px; padding: 0; border: 1px solid #b4b1ad; border-bottom-color: #97948f; border-radius: 4px; background: linear-gradient(#fff, #ecebe9); }
button:disabled { color: #a09f9e; border-color: #c9c7c4; background: #f3f2f1; }

.vsplit { width: 22px; flex: none; display: flex; align-items: center; }
.vsplit .grip { width: 4px; }
.vsplit.left { gap: 7px; padding-left: 1px; }
.vsplit.right { gap: 4px; padding-left: 7px; }

.views { width: 271px; display: flex; flex-direction: column; }
.type-row { display: flex; height: 41px; flex: none; padding: 7px 3px 0 2px; }
.type-row label { width: 43px; line-height: 25px; }
.combo { width: 132px; height: 25px; margin-right: 8px; padding: 0 5px; display: flex; align-items: center; justify-content: space-between; border: 1px solid #b4b1ad; border-bottom-color: #97948f; border-radius: 4px; background: linear-gradient(#fff, #ecebe9); }
.vtree { width: 271px; height: 480px; border-left: 1px solid #b8b5b0; background: linear-gradient(90deg, transparent 134px, #d8d7d5 134px 135px, transparent 135px) #fff; }
.vtree .key { width: 135px; }
.cur { background: linear-gradient(90deg, #fff 20px, transparent 20px 134px, #d0c6bf 134px 135px, transparent 135px), #baaba1; padding-left: 8px; align-items: center; }
.vtree .cur .key { width: 112px; padding-left: 0; margin-left: 7px; }
.row.cur b { letter-spacing: .1px; }
.sub .key { padding-left: 43px; }
.arrowed .key { padding-left: 28px; gap: 7px; }

.time-row { height: 41px; flex: none; display: flex; align-items: center; padding: 0 0 0 11px; border-bottom: 1px solid #d5d3d0; white-space: nowrap; }
.time-row label { margin-top: -1px; }
.field { width: 127px; height: 25px; margin: -1px 7px 0 0; border: 1px solid #aaa7a3; border-radius: 4px; background: #fff; line-height: 22px; padding-left: 3px; color: #3c3c3c; }
.f1 { width: 76px; } .f2 { width: 95px; } .f3 { width: 77px; } .f4 { width: 96px; }
.time-row .exp { margin: -3px 5px 0 216px; }
.status { flex: 1; display: flex; padding: 3px 24px 0 3px; }
.status button { width: 50px; height: 23px; margin-right: 7px; }
.status p { margin: 2px 0 0; font-size: 14px; letter-spacing: .13px; white-space: nowrap; }
.fps { margin: -2px 0 0 auto; }
.resize { position: absolute; right: 1px; bottom: 1px; }

.behind { position: relative; flex: 1; background: #fff; }
.back-head { height: 17px; background: #c1c0bf; }
.back-text { margin: 0 0 0 -2px; height: 361px; font: 13px/17px "DejaVu Sans Mono", monospace; color: #111; overflow: hidden; }
.back-bar { height: 17px; background: #c1c0bf; }
.scroll { position: absolute; right: 0; width: 3px; background: #e87448; }
.s1 { top: 230px; height: 142px; }
.s2 { top: 713px; height: 31px; }
```
